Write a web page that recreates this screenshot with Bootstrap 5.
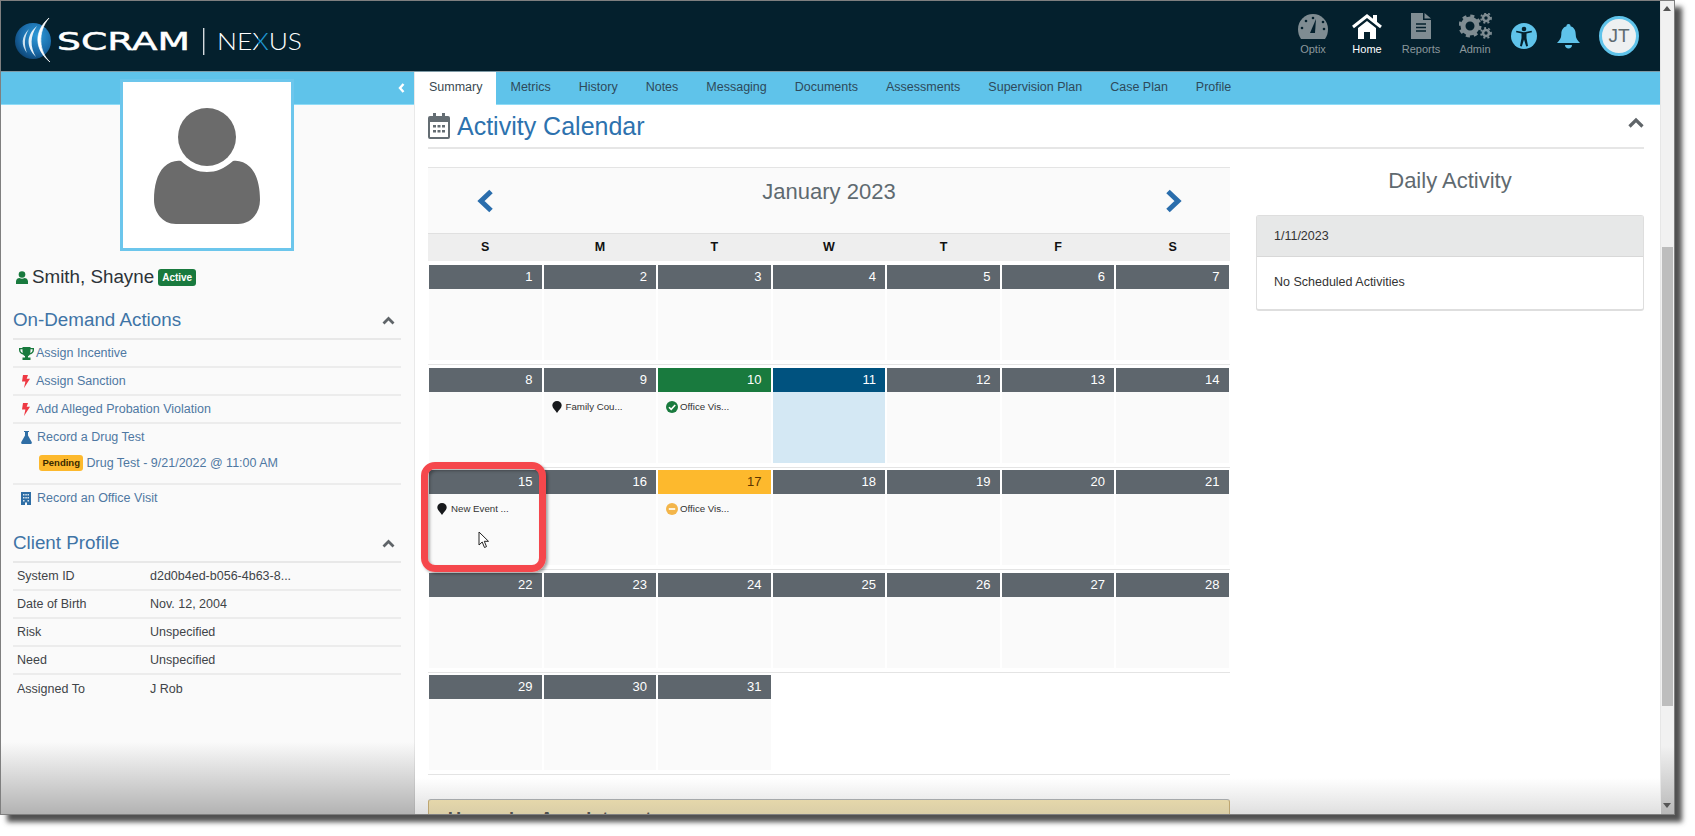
<!doctype html>
<html lang="en">
<head>
<meta charset="utf-8">
<title>SCRAM Nexus</title>
<link href="https://cdn.jsdelivr.net/npm/bootstrap@5.3.0/dist/css/bootstrap.min.css" rel="stylesheet">
<style>
html,body{height:100%;margin:0;background:#fff;overflow:hidden}
body{font-family:"Liberation Sans",Arial,sans-serif;font-size:12.5px;color:#333}
.app-window{width:1675px;height:815px;border:1px solid #7f7f7f;box-shadow:7px 7px 5px rgba(50,50,50,.85);background:#fff}
.left-stack{width:1659px;flex:none}
.top-bar{height:71px;flex:none;background:#04202d;border-bottom:1px solid #7f9aa6;padding:0 21px 0 12px}
.nav-item-x{width:54px;color:#8b979c;font-size:11px;line-height:1;text-align:center;display:flex;flex-direction:column;align-items:center;gap:5px;margin-top:-4px}
.nav-item-x.is-on{color:#fff}
.nav-ico{height:26px;display:flex;align-items:center;justify-content:center}
.acc-ico{margin-left:9px}
.bell-ico{margin-left:20px}
.init-circle{width:40px;height:40px;border-radius:50%;background:#eef0f1;border:3px solid #5fc3ea;color:#5f6b70;font-size:19px;margin-left:19px}
.side-panel{width:414px;flex:none;background:#fafafa;border-right:1px solid #e9e9e9}
.side-band{height:33px;background:#5fc3ea;border-bottom:1px solid #8fdcf7;padding-right:9px}
.photo-frame{width:174px;height:172px;margin:-26px 0 0 119px;background:#fff;border:3px solid #6cc6ec;position:relative}
.avatar-art{margin-top:26px}
.client-name{font-size:18.8px;color:#2d3338;height:26px;margin:13px 0 0 15px;gap:4px}
.active-tag{background:#197a3e;color:#fff;font-size:10px;font-weight:700;padding:2px 4px;border-radius:3px;line-height:13px}
.side-section{margin:0 13px 0 12px}
.client-sec{margin-top:16px}
.side-title{height:34px;font-size:18.8px;color:#3f74a6;padding:0 6px 4px 0;border-bottom:2px solid #e8e8e8}
.side-row{height:28px;border-bottom:2px solid #ececec;color:#4f78a2;padding-left:5px;gap:2px}
.side-row:last-child{border-bottom:0;padding-bottom:2px}
.side-row.tall{height:61px;display:block;padding-top:5px}
.row-ico{width:16px;display:flex;justify-content:center}
.head-row{gap:3px;height:17px}
.pending-line{margin:8px 0 0 21px;gap:3px}
.pending-tag{background:#fdb92d;color:#3a2a00;font-size:9.500px;font-weight:700;border-radius:3px;padding:2px 3.500px;line-height:12px}
.kv-row{height:28px;border-bottom:2px solid #ececec;color:#3f4448;padding-left:4px}
.kv-row:last-child{border-bottom:0}
.kv-key{width:133px}
.main-panel{flex:1;min-width:0;background:#fff}
.tab-band{height:33px;background:#5fc3ea;border-bottom:1px solid #8fdcf7}
.tab-x{padding:0 14px;line-height:30px;color:#2e4a5a;white-space:nowrap}
.tab-x.is-on{background:#fff;color:#3b4a52;height:33px}
.main-body{padding:0 16px 0 13px}
.cal-title{height:44px;border-bottom:2px solid #e6e6e6;font-size:25px;color:#2d72ae;gap:7px}
.cal-title>span{padding-top:1px}
.panes{margin-top:18px;gap:26px}
.cal-pane{width:802px;flex:none}
.month-bar{height:67px;border-top:1px solid #e4e4e4;background:#fafafa;border-bottom:1px solid #e0e0e0;display:grid;grid-template-columns:114px 1fr 114px}
.month-name{font-size:22px;color:#5f6a70;text-align:center;padding-top:10px;line-height:28px}
.month-arrow{display:flex;justify-content:center;padding-top:21px}
.dow-grid{display:grid;grid-template-columns:repeat(7,1fr);height:27px;background:#eeeeee;font-weight:700;color:#111;text-align:center;line-height:27px;margin-bottom:4px}
.wk-grid{display:grid;grid-template-columns:repeat(7,112.500px);column-gap:2px;padding:0 1px 4px;border-bottom:1px solid #e4e4e4;margin-bottom:2.500px}
.day-cell{height:95px;background:#fafafa}
.day-num{height:24px;background:#5e666d;color:#fff;text-align:right;padding-right:9px;font-size:13px;line-height:24px}
.day-ev{font-size:9.700px;color:#333;padding:8px 0 0 8px;gap:4px;white-space:nowrap}
.ev-round{gap:2px}
.is-past .day-num{background:#197a3e}
.is-today{background:#d4e8f4}
.is-today .day-num{background:#00527f}
.is-warn .day-num{background:#fdb92d;color:#5b3500}
.notice-box{margin-top:24px;height:60px;background:#f7e6af;border:1px solid #c9aa66;border-top-color:#a9adb0;border-radius:3px;padding:8px 19px;font-size:18px;font-weight:700;color:#333;line-height:22px}
.day-pane{flex:1;min-width:0}
.day-title{font-size:22px;color:#5f6a70;text-align:center;height:48px;line-height:28px}
.day-card{border:1px solid #dedede;border-bottom-width:2px;border-radius:3px;height:96px}
.day-card-h{height:41px;background:#e7e8e8;border-bottom:1px solid #d8d8d8;padding-left:17px;color:#333}
.day-card-b{padding:16px 17px 0;color:#333}
.fake-bar{width:14px;flex:none;background:linear-gradient(to bottom,#f1f1f1 0,#f1f1f1 745px,#b9b9b9 100%);border-left:1px solid #e6e6e6;padding:0 1px}
.bar-thumb{height:459px;background:#bdbdbd;margin-top:246px}
.side-fade{left:0;bottom:0;width:414px;height:72px;background:linear-gradient(to bottom,rgba(150,150,150,0),rgba(120,120,120,.55))}
.main-fade{left:414px;right:14px;bottom:0;height:36px;background:linear-gradient(to bottom,rgba(170,170,170,0),rgba(150,150,150,.3))}
.call-out{left:420px;top:461px;width:125px;height:110px;border:7px solid #f5474c;border-radius:14px;box-shadow:2px 2px 3px rgba(0,0,0,.35),inset 2px 2px 3px rgba(0,0,0,.3)}
.mouse-ptr{left:477px;top:530px}
.fade-over{pointer-events:none}
.up-arrow{position:absolute;left:2px;top:5px}
.down-arrow{position:absolute;left:2px;bottom:6px}
</style>
</head>
<body>
<div class="app-window d-flex position-relative overflow-hidden">
 <div class="left-stack d-flex flex-column">
  <header class="top-bar d-flex align-items-center justify-content-between">
    <svg width="290" height="62" viewBox="0 0 290 62" role="img" aria-label="SCRAM Nexus">
      <defs>
        <radialGradient id="globeFill" cx="62%" cy="35%" r="75%"><stop offset="0" stop-color="#2d9ad8"/><stop offset=".6" stop-color="#1a6aa8"/><stop offset="1" stop-color="#0c3f6c"/></radialGradient>
        <linearGradient id="xFill" gradientUnits="userSpaceOnUse" x1="240" y1="0" x2="250" y2="0"><stop offset="0" stop-color="#fff"/><stop offset=".5" stop-color="#fff"/><stop offset=".5" stop-color="#1f9ad6"/><stop offset="1" stop-color="#1f9ad6"/></linearGradient>
      </defs>
      <circle cx="20" cy="36" r="18" fill="url(#globeFill)"/>
      <path d="M36 13C21 26 21 44 37 57C26 47 24 27 36 13Z" fill="#fff" stroke="#fff" stroke-width=".7"/>
      <path d="M24 21C13 30 13 42 23 52C17 42 17 31 24 21Z" fill="#e8f2f8"/>
      <path d="M16 24C8 32 8 40 14 48C11 40 11 32 16 24Z" fill="#cfe3ef"/>
      <text x="44" y="45" font-family="'DejaVu Sans','Liberation Sans',sans-serif" font-size="25" fill="#fff" stroke="#fff" stroke-width=".5" textLength="133" lengthAdjust="spacingAndGlyphs">SCRAM</text>
      <rect x="190" y="23" width="1.400" height="27" fill="#d5dade"/>
      <text x="204" y="45" font-family="'Lato','Liberation Sans',sans-serif" font-weight="300" font-size="24" fill="#fff" textLength="85" lengthAdjust="spacingAndGlyphs">NE<tspan fill="url(#xFill)">X</tspan>US</text>
    </svg>
    <nav class="d-flex align-items-center">
      <div class="nav-item-x">
        <span class="nav-ico"><svg width="30" height="25" viewBox="0 0 30 25"><path d="M15 0A15 15 0 0 0 0 15c0 4 1 7 3 10h24c2-3 3-6 3-10A15 15 0 0 0 15 0z" fill="#7f8c92"/><path d="M18 5l-1 14h-5z" fill="#04202d"/><circle cx="15" cy="4" r="1.300" fill="#04202d"/><circle cx="8" cy="7" r="1.300" fill="#04202d"/><circle cx="4" cy="14" r="1.300" fill="#04202d"/><circle cx="25" cy="8" r="1.300" fill="#04202d"/><circle cx="26" cy="15" r="1.300" fill="#04202d"/></svg></span>Optix
      </div>
      <div class="nav-item-x is-on">
        <span class="nav-ico"><svg width="30" height="25" viewBox="0 0 30 25"><path d="M1 13L15 2l14 11" fill="none" stroke="#fff" stroke-width="3"/><rect x="21" y="1" width="4" height="7" fill="#fff"/><path d="M6 14l9-7 9 7v11h-6v-7h-6v7H6z" fill="#fff"/></svg></span>Home
      </div>
      <div class="nav-item-x">
        <span class="nav-ico"><svg width="20" height="26" viewBox="0 0 20 26"><path d="M0 0h12v7h8v19H0z" fill="#7f8c92"/><path d="M13.500 0L20 5.500h-6.500z" fill="#7f8c92"/><path d="M5 11h10M5 14.500h10M5 18h10" stroke="#04202d" stroke-width="1.500"/></svg></span>Reports
      </div>
      <div class="nav-item-x">
        <span class="nav-ico"><svg width="33" height="26" viewBox="0 0 33 26"><circle cx="11" cy="13" r="7" fill="none" stroke="#7f8c92" stroke-width="5"/><circle cx="11" cy="13" r="10" fill="none" stroke="#7f8c92" stroke-width="3" stroke-dasharray="4 3.850"/><circle cx="27" cy="5" r="3" fill="none" stroke="#7f8c92" stroke-width="2.600"/><circle cx="27" cy="5" r="5" fill="none" stroke="#7f8c92" stroke-width="1.800" stroke-dasharray="2 2.200"/><circle cx="27" cy="20" r="3" fill="none" stroke="#7f8c92" stroke-width="2.600"/><circle cx="27" cy="20" r="5" fill="none" stroke="#7f8c92" stroke-width="1.800" stroke-dasharray="2 2.200"/></svg></span>Admin
      </div>
      <svg class="acc-ico" width="26" height="26" viewBox="0 0 26 26"><circle cx="13" cy="13" r="13" fill="#5fc3ea"/><circle cx="13" cy="6" r="2.300" fill="#04202d"/><path d="M5 9.200l5.500 1.300v4.500L9 23l1.800.4L13 16.500l2.200 6.900L17 23l-1.500-8v-4.500L21 9.200l-.4-1.500L13 9.200 5.400 7.700z" fill="#04202d"/></svg>
      <svg class="bell-ico" width="23" height="25" viewBox="0 0 23 25"><path d="M11.500 0a2 2 0 0 1 2 2.300c3.600 1 5.200 4 5.200 8 0 4 1.600 6 4.300 8.700H0c2.700-2.700 4.300-4.700 4.300-8.700 0-4 1.600-7 5.200-8A2 2 0 0 1 11.500 0z" fill="#5fc3ea"/><path d="M8 21h7c0 2-1.500 3.500-3.500 3.500S8 23 8 21z" fill="#5fc3ea"/></svg>
      <div class="init-circle d-flex align-items-center justify-content-center">JT</div>
    </nav>
  </header>
  <div class="d-flex flex-grow-1 overflow-hidden">
    <aside class="side-panel">
      <div class="side-band d-flex align-items-center justify-content-end">
        <svg width="7" height="10" viewBox="0 0 7 10"><path d="M5.500 1L2 5l3.500 4" fill="none" stroke="#fff" stroke-width="2.400"/></svg>
      </div>
      <div class="photo-frame d-flex justify-content-center">
        <svg class="avatar-art" width="106" height="116" viewBox="0 0 106 116"><circle cx="53" cy="29" r="29" fill="#6b6b6b"/><path d="M27 53c9 8 17 11 26 11s17-3 26-11c5-1 12 1 17 6 7 7 10 19 10 33 0 12-8 24-22 24H22C8 116 0 104 0 92c0-14 3-26 10-33 5-5 12-7 17-6z" fill="#6b6b6b"/></svg>
      </div>
      <div class="client-name d-flex align-items-center">
        <svg width="12" height="13" viewBox="0 0 12 13"><circle cx="6" cy="3.500" r="3.300" fill="#197a3e"/><path d="M0 13v-2.500C0 8 2 7 3.500 7c1.500 1 3.500 1 5 0C10 7 12 8 12 10.500V13z" fill="#197a3e"/></svg>
        <span>Smith, Shayne</span><span class="active-tag">Active</span>
      </div>
      <section class="side-section mt-3">
        <div class="side-title d-flex align-items-center justify-content-between">
          <span>On-Demand Actions</span>
          <svg width="13" height="9" viewBox="0 0 13 9"><path d="M1.500 7.500l5-5 5 5" fill="none" stroke="#5f6468" stroke-width="2.800"/></svg>
        </div>
        <div class="side-row d-flex align-items-center">
          <span class="row-ico"><svg width="15" height="13" viewBox="0 0 15 13"><path d="M3.500 0h8v1H15v2c0 2.500-2 4-4 4.500-.5.800-1.500 1.500-2 1.500v1.500h2.500V13h-8v-2.500H6V9c-.5 0-1.500-.7-2-1.500C2 7 0 5.500 0 3V1h3.500zM1.400 2.300V3c0 1.500 1 2.500 2.400 3C3.500 5 3.500 3.500 3.500 2.300zM11.500 2.300c0 1.200 0 2.700-.3 3.700 1.400-.5 2.400-1.500 2.400-3v-.7z" fill="#197a3e"/></svg></span>Assign Incentive
        </div>
        <div class="side-row d-flex align-items-center">
          <span class="row-ico"><svg width="8" height="13" viewBox="0 0 8 13"><path d="M1 0h5L4.700 3.800H8L2 13l1.400-6.500H0z" fill="#ee3a44"/></svg></span>Assign Sanction
        </div>
        <div class="side-row d-flex align-items-center">
          <span class="row-ico"><svg width="8" height="13" viewBox="0 0 8 13"><path d="M1 0h5L4.700 3.800H8L2 13l1.400-6.500H0z" fill="#ee3a44"/></svg></span>Add Alleged Probation Violation
        </div>
        <div class="side-row tall">
          <div class="head-row d-flex align-items-center">
            <span class="row-ico"><svg width="11" height="13" viewBox="0 0 11 13"><path d="M3 0h5v1H7v3.500l3.700 6.500c.4 1-.2 2-1.200 2h-8c-1 0-1.600-1-1.200-2L4 4.500V1H3z" fill="#2f6ea5"/></svg></span>Record a Drug Test
          </div>
          <div class="pending-line d-flex align-items-center"><span class="pending-tag">Pending</span><span>Drug Test - 9/21/2022 @ 11:00 AM</span></div>
        </div>
        <div class="side-row d-flex align-items-center" style="gap:3px">
          <span class="row-ico"><svg width="10" height="13" viewBox="0 0 10 13"><path d="M0 0h10v13H6v-2.500H4V13H0z" fill="#2f6ea5"/><path d="M2 2h1.500v1.500H2zM4.300 2h1.500v1.500H4.300zM6.500 2H8v1.500H6.500zM2 5h1.500v1.500H2zM4.300 5h1.500v1.500H4.300zM6.500 5H8v1.500H6.500zM2 8h1.500v1.500H2zM6.500 8H8v1.500H6.500z" fill="#dbe6ef"/></svg></span><span>Record an Office Visit</span>
        </div>
      </section>
      <section class="side-section client-sec">
        <div class="side-title d-flex align-items-center justify-content-between">
          <span>Client Profile</span>
          <svg width="13" height="9" viewBox="0 0 13 9"><path d="M1.500 7.500l5-5 5 5" fill="none" stroke="#5f6468" stroke-width="2.800"/></svg>
        </div>
        <div class="kv-row d-flex align-items-center"><span class="kv-key">System ID</span><span>d2d0b4ed-b056-4b63-8...</span></div>
        <div class="kv-row d-flex align-items-center"><span class="kv-key">Date of Birth</span><span>Nov. 12, 2004</span></div>
        <div class="kv-row d-flex align-items-center"><span class="kv-key">Risk</span><span>Unspecified</span></div>
        <div class="kv-row d-flex align-items-center"><span class="kv-key">Need</span><span>Unspecified</span></div>
        <div class="kv-row d-flex align-items-center"><span class="kv-key">Assigned To</span><span>J Rob</span></div>
      </section>
    </aside>
    <main class="main-panel">
      <div class="tab-band d-flex">
        <span class="tab-x is-on">Summary</span><span class="tab-x">Metrics</span><span class="tab-x">History</span><span class="tab-x">Notes</span><span class="tab-x">Messaging</span><span class="tab-x">Documents</span><span class="tab-x">Assessments</span><span class="tab-x">Supervision Plan</span><span class="tab-x">Case Plan</span><span class="tab-x">Profile</span>
      </div>
      <div class="main-body">
        <div class="cal-title d-flex align-items-center">
          <svg width="22" height="26" viewBox="0 0 22 26"><path d="M2 3h3V0h3v3h6V0h3v3h3a2 2 0 0 1 2 2v19a2 2 0 0 1-2 2H2a2 2 0 0 1-2-2V5a2 2 0 0 1 2-2zM2 9v15h18V9z" fill="#646d73"/><path d="M5 12h3v2.500H5zM9.500 12h3v2.500h-3zM14 12h3v2.500h-3zM5 17h3v2.500H5zM9.500 17h3v2.500h-3zM14 17h3v2.500h-3z" fill="#646d73"/></svg>
          <span class="flex-grow-1">Activity Calendar</span>
          <svg width="16" height="11" viewBox="0 0 16 11" class="mb-2"><path d="M1.500 9.500l6.500-6.500 6.500 6.500" fill="none" stroke="#5f6468" stroke-width="3.200"/></svg>
        </div>
        <div class="panes d-flex">
          <div class="cal-pane">
            <div class="month-bar">
              <div class="month-arrow"><svg width="17" height="24" viewBox="0 0 17 24"><path d="M14 2.500L4 12l10 9.500" fill="none" stroke="#2a6dac" stroke-width="5"/></svg></div>
              <div class="month-name">January 2023</div>
              <div class="month-arrow"><svg width="17" height="24" viewBox="0 0 17 24"><path d="M3 2.500L13 12 3 21.500" fill="none" stroke="#2a6dac" stroke-width="5"/></svg></div>
            </div>
            <div class="dow-grid"><span>S</span><span>M</span><span>T</span><span>W</span><span>T</span><span>F</span><span>S</span></div>
            <div class="wk-grid">
              <div class="day-cell"><div class="day-num">1</div></div><div class="day-cell"><div class="day-num">2</div></div><div class="day-cell"><div class="day-num">3</div></div><div class="day-cell"><div class="day-num">4</div></div><div class="day-cell"><div class="day-num">5</div></div><div class="day-cell"><div class="day-num">6</div></div><div class="day-cell"><div class="day-num">7</div></div>
            </div>
            <div class="wk-grid">
              <div class="day-cell"><div class="day-num">8</div></div>
              <div class="day-cell"><div class="day-num">9</div><div class="day-ev d-flex align-items-center"><svg width="10" height="12" viewBox="0 0 10 12"><path d="M5 12C3 9 .3 7 .3 4.300A4.700 4.300 0 0 1 9.700 4.300C9.700 7 7 9 5 12z" fill="#17191c"/></svg>Family Cou...</div></div>
              <div class="day-cell is-past"><div class="day-num">10</div><div class="day-ev ev-round d-flex align-items-center"><svg width="12" height="12" viewBox="0 0 12 12"><circle cx="6" cy="6" r="6" fill="#197a3e"/><path d="M3 6.200l2.200 2.200L9.200 4" fill="none" stroke="#fff" stroke-width="1.600"/></svg>Office Vis...</div></div>
              <div class="day-cell is-today"><div class="day-num">11</div></div>
              <div class="day-cell"><div class="day-num">12</div></div><div class="day-cell"><div class="day-num">13</div></div><div class="day-cell"><div class="day-num">14</div></div>
            </div>
            <div class="wk-grid">
              <div class="day-cell"><div class="day-num">15</div><div class="day-ev d-flex align-items-center"><svg width="10" height="12" viewBox="0 0 10 12"><path d="M5 12C3 9 .3 7 .3 4.300A4.700 4.300 0 0 1 9.700 4.300C9.700 7 7 9 5 12z" fill="#17191c"/></svg>New Event ...</div></div>
              <div class="day-cell"><div class="day-num">16</div></div>
              <div class="day-cell is-warn"><div class="day-num">17</div><div class="day-ev ev-round d-flex align-items-center"><svg width="12" height="12" viewBox="0 0 12 12"><circle cx="6" cy="6" r="6" fill="#f3b54a"/><rect x="2.800" y="5" width="6.400" height="2" fill="#fdf3dc"/></svg>Office Vis...</div></div>
              <div class="day-cell"><div class="day-num">18</div></div><div class="day-cell"><div class="day-num">19</div></div><div class="day-cell"><div class="day-num">20</div></div><div class="day-cell"><div class="day-num">21</div></div>
            </div>
            <div class="wk-grid">
              <div class="day-cell"><div class="day-num">22</div></div><div class="day-cell"><div class="day-num">23</div></div><div class="day-cell"><div class="day-num">24</div></div><div class="day-cell"><div class="day-num">25</div></div><div class="day-cell"><div class="day-num">26</div></div><div class="day-cell"><div class="day-num">27</div></div><div class="day-cell"><div class="day-num">28</div></div>
            </div>
            <div class="wk-grid">
              <div class="day-cell"><div class="day-num">29</div></div><div class="day-cell"><div class="day-num">30</div></div><div class="day-cell"><div class="day-num">31</div></div>
            </div>
            <div class="notice-box">Upcoming Appointments</div>
          </div>
          <div class="day-pane">
            <div class="day-title">Daily Activity</div>
            <div class="day-card">
              <div class="day-card-h d-flex align-items-center">1/11/2023</div>
              <div class="day-card-b">No Scheduled Activities</div>
            </div>
          </div>
        </div>
      </div>
    </main>
  </div>
 </div>
 <div class="fake-bar position-relative">
   <svg class="up-arrow" width="8" height="5" viewBox="0 0 8 5"><path d="M4 0l4 5H0z" fill="#555"/></svg>
   <div class="bar-thumb"></div>
   <svg class="down-arrow" width="8" height="5" viewBox="0 0 8 5"><path d="M4 5L0 0h8z" fill="#555"/></svg>
 </div>
 <div class="side-fade fade-over position-absolute"></div>
 <div class="main-fade fade-over position-absolute"></div>
 <div class="call-out fade-over position-absolute"></div>
 <svg class="mouse-ptr fade-over position-absolute" width="12" height="18" viewBox="0 0 12 18"><path d="M1 1v13l3.200-3 2.300 5.500 2-.9L6.300 10.300H10.500z" fill="#fff" stroke="#222" stroke-width="1"/></svg>
</div>
<script src="https://cdn.jsdelivr.net/npm/bootstrap@5.3.0/dist/js/bootstrap.bundle.min.js"></script>
</body>
</html>
